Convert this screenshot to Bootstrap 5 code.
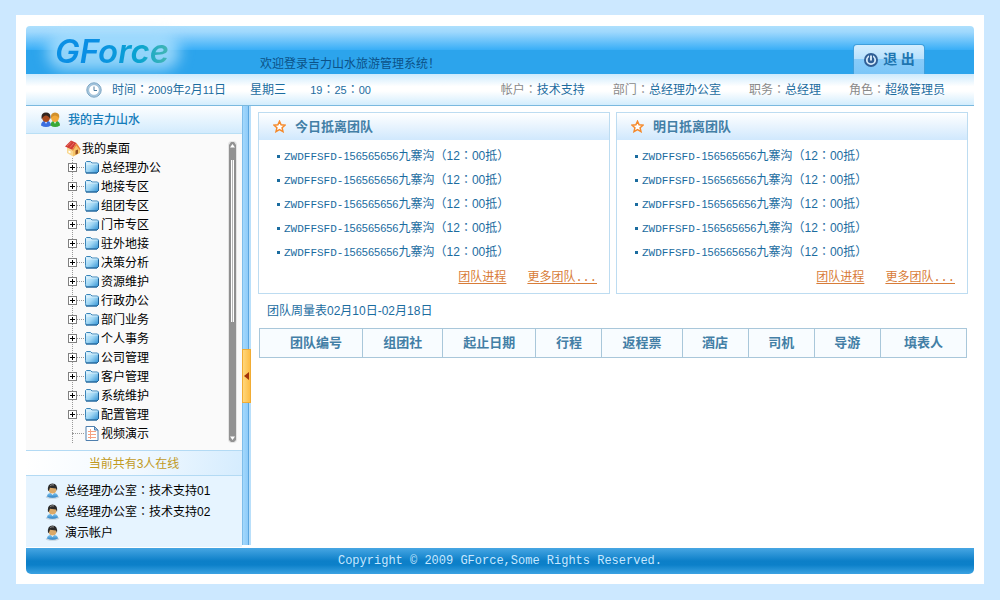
<!DOCTYPE html>
<html lang="zh-CN">
<head>
<meta charset="utf-8">
<meta name="viewport" content="width=device-width, initial-scale=1">
<title>GForce 吉力山水旅游管理系统</title>
<link rel="stylesheet" href="https://cdn.jsdelivr.net/npm/bootstrap@5.3.0/dist/css/bootstrap.min.css">
<style>
  body { background: #cce8ff; font: 12px/16px "Liberation Sans", "Noto Sans CJK SC", sans-serif; color: #1b6c9f; }
  a { color: inherit; text-decoration: none; }
  button { font: inherit; }
  .page-pad { padding: 15px 16px 16px; }
  .sheet { background: #fff; padding: 11px 10px 10px; }

  /* small helpers for mixed Latin / Chinese text */
  .num { font-size: 11px; }
  .lat { font-family: "Liberation Mono", monospace; font-size: 11px; }
  .dots { font-family: "Liberation Mono", monospace; }
  .wide { font-family: "Noto Sans CJK TC", sans-serif; font-feature-settings: "locl" 0; }

  .topbar { height: 48px; padding-left: 29px; padding-right: 49px; border-radius: 4px 4px 0 0;
    background: linear-gradient(#aee0fd 0, #9fd8fd 6px, #38aef7 24px, #2ca4ec 24px, #2ca4ec 100%); }
  .brand { position: relative; width: 205px; padding-top: 3px; font: italic 600 33px/44px Inter, sans-serif; }
  .brand::before { content: ""; position: absolute; inset: 8px 80px 4px -8px; border-radius: 20px; background: rgba(190,232,255,.7); filter: blur(7px); }
  .brand a { position: relative; background: linear-gradient(90deg, #0a8fe4 40px, #0aa4cf 85px, #4ab8b0 116px); -webkit-background-clip: text; background-clip: text; color: transparent; }
  .welcome { color: #0b5288; padding-top: 11px; }
  .exit-btn { width: 72px; height: 30px; border: 1px solid #3f9fdc; border-bottom: 0; border-radius: 4px 4px 0 0; padding: 0;
    background: linear-gradient(#d5eefe, #b6e0fd 50%, #88cbf9 50%, #7cc6f8); color: #1e75b0; font: bold 14px/20px "Liberation Serif", "Noto Sans CJK SC", serif; }

  .infobar { height: 32px; padding-left: 60px; padding-right: 29px; border-bottom: 1px solid #7ab9df;
    background: linear-gradient(#cdeafd, #fff 40%, #fff 55%, #d3edfd); }
  .infobar .clock { margin-right: 10px; }
  .infobar .key { color: #8a8a8a; }
  .infobar .facts { gap: 28px; }

  .side { width: 216px; flex: none; background: #e6f4ff; }
  .side-head { height: 28px; padding-left: 15px; font-weight: 500; color: #147cba; border-bottom: 1px solid #b9dff5; background: linear-gradient(#fdfeff, #d2ebfd); }
  .tree-box { background: #fafafa; padding: 5px 5px 7px 40px; }
  .tree-box a { color: #000; }
  .tree-box li { height: 19px; }
  .root-row { height: 19px; margin-left: -1px; gap: 1px; }
  .branch { position: relative; padding-left: 2px; }
  .branch::before { content: ""; position: absolute; left: 6px; top: 0; bottom: 0; border-left: 1px dotted #999; }
  .branch svg { margin-right: 2px; }
  .toggle { position: relative; width: 9px; height: 9px; padding: 0; border: 1px solid #808080; background: #fff; }
  .toggle::before, .toggle::after { content: ""; position: absolute; background: #000; }
  .toggle::before { left: 1px; right: 1px; top: 3px; height: 1px; }
  .toggle::after { top: 1px; bottom: 1px; left: 3px; width: 1px; }
  .dash { width: 7px; margin-right: 1px; border-top: 1px dotted #999; }
  .dash-leaf { width: 12px; }
  .scroller { width: 9px; margin: 2px 0 0; border-radius: 4px; background: #e4e4e4; padding: 1px; }
  .thumb { height: 162px; background: linear-gradient(90deg, #8f8f8f 2px, #fff 2px, #fff 3px, #b5b5b5 3px, #b5b5b5 4px, #fff 4px, #fff 5px, #8f8f8f 5px); }
  .track-end { background: #929292; }
  .online { height: 26px; padding-top: 2px; color: #c19a1e; border-top: 1px solid #b3daf4; border-bottom: 1px solid #b3daf4; background: linear-gradient(100deg, #fff, #f2f9ff 50%, #d5ecfe); }
  .users { padding: 4px 0 4px 19px; color: #000; }
  .users li { height: 21px; gap: 5px; }

  .splitter { position: relative; width: 9px; flex: none; margin-bottom: 2px; background: linear-gradient(90deg, #7fbdea 1px, #a2d8fd 1px, #8fcbf8 6px, #5ba6df 6px, #5ba6df 7px, #b9dffa 7px); }
  .handle { position: absolute; top: 243px; left: 0; width: 9px; height: 54px; padding: 0; border: 1px solid #f1ac34; background: linear-gradient(90deg, #ffd77c, #fdbd45); }

  .main-area { min-width: 0; padding: 6px 6px 0 7px; }
  .panels { grid-template-columns: 1fr 1fr; gap: 6px; }
  .panel { border: 1px solid #bddcf1; }
  .panel h2 { height: 27px; margin: 0; padding-left: 14px; gap: 9px; font-size: 13px; line-height: 16px; font-weight: bold; color: #437fa6; background: linear-gradient(#fff, #d0e8fd); }
  .panel ul { padding: 4px 0 0 18px; }
  .panel li { height: 24px; gap: 4px; }
  .panel li::before { content: ""; width: 3px; height: 3px; background: #1b6c9f; }
  .more { padding: 5px 12px 7px; gap: 21px; }
  .more a { color: #d87c38; text-decoration: underline; text-underline-offset: 2px; }
  .week-title { margin: 9px 0; padding-left: 9px; font-size: 12px; line-height: 16px; font-weight: 400; }
  .week { width: calc(100% - 2px); margin-left: 1px; table-layout: fixed; border-collapse: collapse; }
  .week th { height: 29px; padding: 0; border: 1px solid #a9c7da; background: #f8fcff; text-align: center; font-size: 13px; color: #437fa6; }
  .week th:first-child { padding-left: 10px; }
  .w-no { width: 103px; } .w-date { width: 93px; } .w-mid { width: 80px; } .w-short { width: 66px; } .w-by { width: 86px; }
  .foot { height: 26px; margin-top: 1px; border-radius: 0 0 5px 5px; color: #c8e8ff; font: 12px/16px "Liberation Mono", monospace;
    background: linear-gradient(#47a6e3, #0c7fc8 50%, #0c80c9 65%, #3ba2e2); }
</style>
</head>
<body>
<svg width="0" height="0" class="position-absolute" aria-hidden="true">
  <defs>
    <linearGradient id="gFolder" x1="0" y1="0" x2="1" y2="1"><stop offset="0" stop-color="#e2f5fe"/><stop offset=".5" stop-color="#9fd6f4"/><stop offset="1" stop-color="#2c8fd2"/></linearGradient>
    <linearGradient id="gBody" x1="0" y1="0" x2="0" y2="1"><stop offset="0" stop-color="#8ed0f5"/><stop offset="1" stop-color="#2a7fc4"/></linearGradient>
    <symbol id="folder" viewBox="0 0 14 13"><path d="M.5 9.500V1.500L1.500.5h4l1.500 1.500h5.500l1 1v7.500l-1.500 1.500h-11z" fill="url(#gFolder)" stroke="#3a84b8"/><path d="M1.500 3h11" stroke="#fff" stroke-opacity=".5"/><path d="M1 12h11l1.500-1.500V4" fill="none" stroke="#1f5f93"/></symbol>
    <symbol id="user" viewBox="0 0 15 16"><ellipse cx="7.500" cy="14" rx="6.800" ry="1.700" fill="#c3d3e0"/><path d="M2 13.500q0-3.700 5.500-4Q13 10 13 13.500q-5.500 2.500-11 0z" fill="url(#gBody)"/><path d="M5.500 9.500h4L7.500 12z" fill="#fff"/><ellipse cx="7.500" cy="6.500" rx="3.900" ry="4" fill="#dba968"/><path d="M3 8Q2 .7 7.500.5 13 .7 12 8L11 5.500 5 4.800 4 7.500z" fill="#2b2b2b"/><path d="M5 2.500q2-1.200 4-.5" stroke="#8a8a8a" fill="none"/></symbol>
    <symbol id="star" viewBox="0 0 13 13"><path d="M6.500 1.300l1.600 3.500 3.900.4-2.900 2.600.9 3.800-3.500-2-3.500 2 .9-3.800L1 5.200l3.900-.4z" fill="#fff" stroke="#f58a2c" stroke-width="1.500"/></symbol>
  </defs>
</svg>

<div class="container-fluid page-pad">
<div class="sheet">
  <header class="topbar d-flex">
    <div class="brand"><a href="#">GForce</a></div>
    <div class="welcome d-flex align-items-center flex-grow-1"><span class="mt-3">欢迎登录吉力山水旅游管理系统！</span></div>
    <button type="button" class="exit-btn d-flex align-items-center justify-content-center gap-1 align-self-end">
      <svg width="16" height="16" viewBox="0 0 16 16" aria-hidden="true"><circle cx="8" cy="8" r="7" fill="#315f96"/><circle cx="8" cy="8" r="4.200" fill="none" stroke="#d7ebfa" stroke-width="1.800"/><path d="M8 3v5" stroke="#315f96" stroke-width="4"/><path d="M8 3.500v5" stroke="#e6f4ff" stroke-width="1.800"/></svg>
      <span>退&nbsp;出</span>
    </button>
  </header>

  <div class="infobar d-flex align-items-center justify-content-between">
    <div class="d-flex align-items-center">
      <svg class="clock" width="16" height="16" viewBox="0 0 16 16" aria-hidden="true"><circle cx="8" cy="8" r="7.200" fill="#a9c9e0" stroke="#7ba5c4"/><circle cx="8" cy="8" r="5.300" fill="#fff" stroke="#8aaec9" stroke-width=".6"/><path d="M8 4.500V8.500H11" fill="none" stroke="#4d7c9f"/></svg>
      <span>时间<span class="wide">：</span><span class="num">2009</span>年<span class="num">2</span>月<span class="num">11</span>日</span>
      <span class="ms-4">星期三</span>
      <span class="ms-4"><span class="num">19</span><span class="wide">：</span><span class="num">25</span><span class="wide">：</span><span class="num">00</span></span>
    </div>
    <div class="facts d-flex">
      <span><span class="key">帐户<span class="wide">：</span></span>技术支持</span>
      <span><span class="key">部门<span class="wide">：</span></span>总经理办公室</span>
      <span><span class="key">职务<span class="wide">：</span></span>总经理</span>
      <span><span class="key">角色<span class="wide">：</span></span>超级管理员</span>
    </div>
  </div>

  <div class="d-flex">
    <aside class="side">
      <div class="side-head d-flex align-items-center">
        <svg width="19" height="16" viewBox="0 0 19 16" aria-hidden="true"><path d="M0 13.500q0-4.500 5-5 5 .5 5 5-5 3-10 0z" fill="#3b6fe0"/><path d="M3.500 8.500h3L5 12z" fill="#fff"/><ellipse cx="5" cy="5.500" rx="4" ry="4.500" fill="#a84a1e"/><path d="M.7 7Q-.5.6 5 .5 10.500.6 9.300 7 7.500 3.500 5 3.500T.7 7z" fill="#30241f"/><path d="M9.500 13.500q0-4.500 4.500-5 5 .5 5 5-5 3-9.500 0z" fill="#38a838"/><path d="M12.500 8.500h3L14 12z" fill="#fff"/><ellipse cx="14" cy="5.500" rx="4" ry="4.500" fill="#f2a93a"/><path d="M10 6Q9.500.6 14 .5q5 .1 4.200 5.500-2-2.500-4.200-2.500T10 6z" fill="#d0902e"/></svg>
        <a href="#" class="ms-2">我的吉力山水</a>
      </div>
      <div class="tree-box d-flex">
        <nav class="flex-grow-1">
          <a href="#" class="root-row d-flex align-items-center">
            <svg width="16" height="17" viewBox="0 0 16 17" aria-hidden="true"><path d="M2 7l6 2 6-3.500V13l-6 3.500L2 13z" fill="#f9d890"/><path d="M8 9.500L11.500 4 15 9v4L8 16.500z" fill="#f6c468"/><path d="M10.500 10.500l2.500-1v4l-2.500 1.200z" fill="#95501f"/><path d="M3.500 10.500l2 .8v2l-2-.8z" fill="#fff"/><path d="M0 6.500L6 .5 11.500 3 7.200 9.800z" fill="#d23c36"/><path d="M11.500 3L16 9.500l-1.200.5-3.500-4.500L7.800 11l-.8-1.200z" fill="#e8843c"/><path d="M2 6l4.500-4M5 7.500L9 3" stroke="#ee8478" stroke-width=".7"/></svg>
            <span>我的桌面</span>
          </a>
          <ul class="branch list-unstyled mb-0">
            <li class="d-flex align-items-center"><button type="button" class="toggle" aria-label="展开"></button><span class="dash"></span><a href="#" class="d-flex align-items-center"><svg width="14" height="13"><use href="#folder"/></svg>总经理办公</a></li>
            <li class="d-flex align-items-center"><button type="button" class="toggle" aria-label="展开"></button><span class="dash"></span><a href="#" class="d-flex align-items-center"><svg width="14" height="13"><use href="#folder"/></svg>地接专区</a></li>
            <li class="d-flex align-items-center"><button type="button" class="toggle" aria-label="展开"></button><span class="dash"></span><a href="#" class="d-flex align-items-center"><svg width="14" height="13"><use href="#folder"/></svg>组团专区</a></li>
            <li class="d-flex align-items-center"><button type="button" class="toggle" aria-label="展开"></button><span class="dash"></span><a href="#" class="d-flex align-items-center"><svg width="14" height="13"><use href="#folder"/></svg>门市专区</a></li>
            <li class="d-flex align-items-center"><button type="button" class="toggle" aria-label="展开"></button><span class="dash"></span><a href="#" class="d-flex align-items-center"><svg width="14" height="13"><use href="#folder"/></svg>驻外地接</a></li>
            <li class="d-flex align-items-center"><button type="button" class="toggle" aria-label="展开"></button><span class="dash"></span><a href="#" class="d-flex align-items-center"><svg width="14" height="13"><use href="#folder"/></svg>决策分析</a></li>
            <li class="d-flex align-items-center"><button type="button" class="toggle" aria-label="展开"></button><span class="dash"></span><a href="#" class="d-flex align-items-center"><svg width="14" height="13"><use href="#folder"/></svg>资源维护</a></li>
            <li class="d-flex align-items-center"><button type="button" class="toggle" aria-label="展开"></button><span class="dash"></span><a href="#" class="d-flex align-items-center"><svg width="14" height="13"><use href="#folder"/></svg>行政办公</a></li>
            <li class="d-flex align-items-center"><button type="button" class="toggle" aria-label="展开"></button><span class="dash"></span><a href="#" class="d-flex align-items-center"><svg width="14" height="13"><use href="#folder"/></svg>部门业务</a></li>
            <li class="d-flex align-items-center"><button type="button" class="toggle" aria-label="展开"></button><span class="dash"></span><a href="#" class="d-flex align-items-center"><svg width="14" height="13"><use href="#folder"/></svg>个人事务</a></li>
            <li class="d-flex align-items-center"><button type="button" class="toggle" aria-label="展开"></button><span class="dash"></span><a href="#" class="d-flex align-items-center"><svg width="14" height="13"><use href="#folder"/></svg>公司管理</a></li>
            <li class="d-flex align-items-center"><button type="button" class="toggle" aria-label="展开"></button><span class="dash"></span><a href="#" class="d-flex align-items-center"><svg width="14" height="13"><use href="#folder"/></svg>客户管理</a></li>
            <li class="d-flex align-items-center"><button type="button" class="toggle" aria-label="展开"></button><span class="dash"></span><a href="#" class="d-flex align-items-center"><svg width="14" height="13"><use href="#folder"/></svg>系统维护</a></li>
            <li class="d-flex align-items-center"><button type="button" class="toggle" aria-label="展开"></button><span class="dash"></span><a href="#" class="d-flex align-items-center"><svg width="14" height="13"><use href="#folder"/></svg>配置管理</a></li>
            <li class="d-flex align-items-center"><span class="dash dash-leaf ms-1"></span><a href="#" class="d-flex align-items-center"><svg width="14" height="15" viewBox="0 0 14 15" aria-hidden="true"><path d="M1 .5h8.500l3.500 3.500v10.500H1z" fill="#fff" stroke="#4f7fae"/><path d="M9.500.5V4H13z" fill="#a9c9e8" stroke="#4f7fae"/><path d="M3 5.500h8M3 8.500h8M3 11.500h8M5.500 3v10" stroke="#f5a283"/></svg>视频演示</a></li>
          </ul>
        </nav>
        <div class="scroller d-flex flex-column" aria-hidden="true">
          <svg width="7" height="18" viewBox="0 0 7 18"><path d="M0 18V3l2-3h3l2 3v15z" fill="#929292"/><path d="M3.500 2L6 5.500H1z" fill="#fff"/></svg>
          <div class="thumb flex-shrink-0"></div>
          <div class="track-end flex-grow-1"></div>
          <svg width="7" height="7" viewBox="0 0 7 7"><path d="M0 0h7v5L5 7H2L0 5z" fill="#929292"/><path d="M1 1.500h5L3.500 5z" fill="#fff"/></svg>
        </div>
      </div>
      <div class="online d-flex align-items-center justify-content-center">当前共有3人在线</div>
      <ul class="users list-unstyled mb-0">
        <li class="d-flex align-items-center"><svg width="15" height="16"><use href="#user"/></svg><span>总经理办公室<span class="wide">：</span>技术支持01</span></li>
        <li class="d-flex align-items-center"><svg width="15" height="16"><use href="#user"/></svg><span>总经理办公室<span class="wide">：</span>技术支持02</span></li>
        <li class="d-flex align-items-center"><svg width="15" height="16"><use href="#user"/></svg><span>演示帐户</span></li>
      </ul>
    </aside>

    <div class="splitter">
      <button type="button" class="handle d-flex align-items-center justify-content-center" aria-label="收起"><svg width="5" height="8" viewBox="0 0 5 8"><path d="M5 0v8L0 4z" fill="#a3340a"/></svg></button>
    </div>

    <main class="main-area flex-grow-1">
      <div class="panels d-grid">
        <section class="panel">
          <h2 class="d-flex align-items-center"><svg width="13" height="13"><use href="#star"/></svg>今日抵离团队</h2>
          <ul class="list-unstyled mb-0">
            <li class="d-flex align-items-center"><a href="#"><span class="lat">ZWDFFSFD-</span><span class="num">156565656</span>九寨沟<span class="wide">（</span>12<span class="wide">：</span>00抵<span class="wide">）</span></a></li>
            <li class="d-flex align-items-center"><a href="#"><span class="lat">ZWDFFSFD-</span><span class="num">156565656</span>九寨沟<span class="wide">（</span>12<span class="wide">：</span>00抵<span class="wide">）</span></a></li>
            <li class="d-flex align-items-center"><a href="#"><span class="lat">ZWDFFSFD-</span><span class="num">156565656</span>九寨沟<span class="wide">（</span>12<span class="wide">：</span>00抵<span class="wide">）</span></a></li>
            <li class="d-flex align-items-center"><a href="#"><span class="lat">ZWDFFSFD-</span><span class="num">156565656</span>九寨沟<span class="wide">（</span>12<span class="wide">：</span>00抵<span class="wide">）</span></a></li>
            <li class="d-flex align-items-center"><a href="#"><span class="lat">ZWDFFSFD-</span><span class="num">156565656</span>九寨沟<span class="wide">（</span>12<span class="wide">：</span>00抵<span class="wide">）</span></a></li>
          </ul>
          <div class="more d-flex justify-content-end"><a href="#">团队进程</a><a href="#">更多团队<span class="dots">...</span></a></div>
        </section>
        <section class="panel">
          <h2 class="d-flex align-items-center"><svg width="13" height="13"><use href="#star"/></svg>明日抵离团队</h2>
          <ul class="list-unstyled mb-0">
            <li class="d-flex align-items-center"><a href="#"><span class="lat">ZWDFFSFD-</span><span class="num">156565656</span>九寨沟<span class="wide">（</span>12<span class="wide">：</span>00抵<span class="wide">）</span></a></li>
            <li class="d-flex align-items-center"><a href="#"><span class="lat">ZWDFFSFD-</span><span class="num">156565656</span>九寨沟<span class="wide">（</span>12<span class="wide">：</span>00抵<span class="wide">）</span></a></li>
            <li class="d-flex align-items-center"><a href="#"><span class="lat">ZWDFFSFD-</span><span class="num">156565656</span>九寨沟<span class="wide">（</span>12<span class="wide">：</span>00抵<span class="wide">）</span></a></li>
            <li class="d-flex align-items-center"><a href="#"><span class="lat">ZWDFFSFD-</span><span class="num">156565656</span>九寨沟<span class="wide">（</span>12<span class="wide">：</span>00抵<span class="wide">）</span></a></li>
            <li class="d-flex align-items-center"><a href="#"><span class="lat">ZWDFFSFD-</span><span class="num">156565656</span>九寨沟<span class="wide">（</span>12<span class="wide">：</span>00抵<span class="wide">）</span></a></li>
          </ul>
          <div class="more d-flex justify-content-end"><a href="#">团队进程</a><a href="#">更多团队<span class="dots">...</span></a></div>
        </section>
      </div>

      <h3 class="week-title">团队周量表02月10日-02月18日</h3>
      <table class="week">
        <colgroup><col class="w-no"><col class="w-mid"><col class="w-date"><col class="w-short"><col class="w-mid"><col class="w-short"><col class="w-short"><col class="w-short"><col class="w-by"></colgroup>
        <thead><tr><th scope="col">团队编号</th><th scope="col">组团社</th><th scope="col">起止日期</th><th scope="col">行程</th><th scope="col">返程票</th><th scope="col">酒店</th><th scope="col">司机</th><th scope="col">导游</th><th scope="col">填表人</th></tr></thead>
      </table>
    </main>
  </div>

  <footer class="foot d-flex align-items-center justify-content-center">Copyright © 2009 GForce,Some Rights Reserved.</footer>
</div>
</div>
<script src="https://cdn.jsdelivr.net/npm/bootstrap@5.3.0/dist/js/bootstrap.bundle.min.js"></script>
</body>
</html>
